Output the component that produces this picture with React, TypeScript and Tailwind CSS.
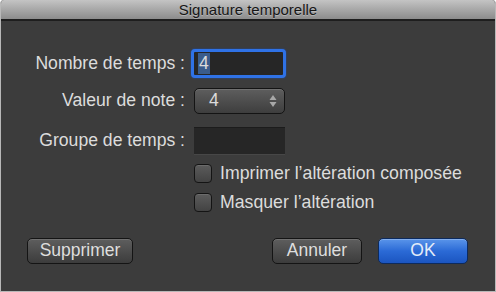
import React from 'react';

const font = { fontFamily: '"Liberation Sans", Arial, sans-serif' };

// Dark grey bevelled push button, the Logic Pro style.
function PushButton({ label, width, primary = false }: { label: string; width: string; primary?: boolean }) {
  return (
    <button
      className={`${width} h-[26px] rounded-[5px] border text-[17.5px] leading-none ${
        primary
          ? 'border-[#0d2a5c] bg-gradient-to-b from-[#5a95ea] via-[#2b6ad6] to-[#1b55c0] text-[#e4ecf8] shadow-[inset_0_1px_0_rgba(255,255,255,0.25)]'
          : 'border-[#141414] bg-gradient-to-b from-[#5e5e5e] to-[#3c3c3c] text-[#dedede] shadow-[inset_0_1px_0_rgba(255,255,255,0.12)]'
      }`}
    >
      {label}
    </button>
  );
}

function Checkbox({ label }: { label: string }) {
  return (
    <div className="flex items-center gap-[8px]">
      <div className="w-[18px] h-[19px] rounded-[4px] border border-[#141414] bg-gradient-to-b from-[#5c5c5c] to-[#434343] shadow-[inset_0_1px_0_rgba(255,255,255,0.1)]" />
      <span className="text-[17.7px] text-[#dcdcdc] leading-none">{label}</span>
    </div>
  );
}

function Label({ text }: { text: string }) {
  return <span className="w-[184px] text-right text-[17.6px] text-[#dcdcdc] leading-none">{text}</span>;
}

export default function App() {
  return (
    <div className="w-[496px] h-[292px] bg-[#3c3c3c] border-x border-b border-[#b8b8b8] rounded-t-[4px] overflow-hidden flex flex-col" style={font}>
      <div className="h-[19px] flex items-center justify-center bg-gradient-to-b from-[#c4c4c4] to-[#8c8c8c] border-b-2 border-[#1e1e1e] box-content">
        <span className="text-[15px] text-[#161616] leading-none [text-shadow:0_1px_0_rgba(255,255,255,0.3)]">Signature temporelle</span>
      </div>

      <div className="flex flex-col pt-[28px]">
        <div className="flex items-center gap-[6px]">
          <Label text="Nombre de temps :" />
          <div className="w-[95px] h-[29px] rounded-[4px] border-[3px] border-[#2f72e6] shadow-[0_0_2px_#1a4fb0] bg-[#262626] flex items-center pl-[4px]">
            <span className="bg-[#3a5c8c] text-[#dcdcdc] text-[17.6px] leading-none px-[1px] py-[2px]">4</span>
          </div>
        </div>

        <div className="flex items-center gap-[9px] mt-[10px]">
          <Label text="Valeur de note :" />
          <div className="w-[91px] h-[26px] rounded-[5px] border border-[#141414] bg-gradient-to-b from-[#5e5e5e] to-[#3e3e3e] shadow-[inset_0_1px_0_rgba(255,255,255,0.12)] flex items-center justify-between pl-[14px] pr-[7px]">
            <span className="text-[17.6px] text-[#dcdcdc] leading-none">4</span>
            <svg width="8" height="14" viewBox="0 0 8 14">
              <path d="M4 1 L7.5 6 L0.5 6 Z" fill="#a8a8a8" />
              <path d="M4 13 L7.5 8 L0.5 8 Z" fill="#a8a8a8" />
            </svg>
          </div>
        </div>

        <div className="flex items-center gap-[9px] mt-[13px]">
          <Label text="Groupe de temps :" />
          <div className="w-[91px] h-[27px] bg-[#262626] border-t border-[#1c1c1c] shadow-[0_1px_0_rgba(255,255,255,0.06)]" />
        </div>

        <div className="flex flex-col gap-[10px] mt-[10px] pl-[193px]">
          <Checkbox label="Imprimer l’altération composée" />
          <Checkbox label="Masquer l’altération" />
        </div>

        <div className="flex items-center mt-[26px] pl-[26px] pr-[27px]">
          <PushButton label="Supprimer" width="w-[106px]" />
          <div className="flex-1" />
          <PushButton label="Annuler" width="w-[90px]" />
          <div className="w-[16px]" />
          <PushButton label="OK" width="w-[90px]" primary />
        </div>
      </div>
    </div>
  );
}
